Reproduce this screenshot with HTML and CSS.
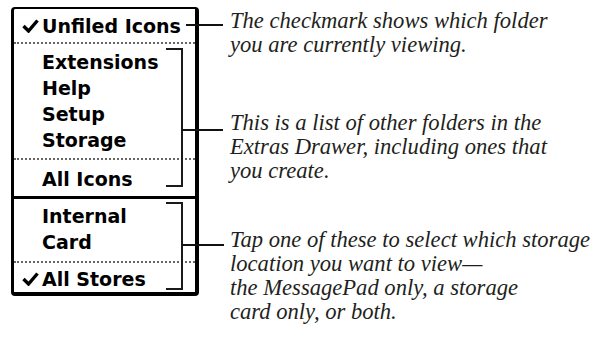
FILE: index.html
```html
<!DOCTYPE html>
<html lang="en">
<head>
    <meta charset="UTF-8">
    <title>Extras Drawer folder picker</title>
    <link rel="stylesheet" href="styles.css">
</head>
<body>
    <div class="figure">
        <div class="menu">
            <div class="section head">
                <div class="item"><span class="mark"><svg width="17" height="14" viewBox="0 0 17 14"><path d="M1.5 7 L6.5 12 L15.5 1.5" /></svg></span>Unfiled Icons</div>
            </div>
            <div class="dots"></div>
            <div class="section folders">
                <div class="item"><span class="mark"></span>Extensions</div>
                <div class="item"><span class="mark"></span>Help</div>
                <div class="item"><span class="mark"></span>Setup</div>
                <div class="item"><span class="mark"></span>Storage</div>
            </div>
            <div class="dots"></div>
            <div class="section all">
                <div class="item"><span class="mark"></span>All Icons</div>
            </div>
            <div class="rule"></div>
            <div class="section stores">
                <div class="item"><span class="mark"></span>Internal</div>
                <div class="item"><span class="mark"></span>Card</div>
            </div>
            <div class="dots"></div>
            <div class="section last">
                <div class="item"><span class="mark"><svg width="17" height="14" viewBox="0 0 17 14"><path d="M1.5 7 L6.5 12 L15.5 1.5" /></svg></span>All Stores</div>
            </div>
        </div>

        <div class="notes">
            <p class="note first">The checkmark shows which folder<br>you are currently viewing.</p>
            <p class="note second">This is a list of other folders in the<br>Extras Drawer, including ones that<br>you create.</p>
            <p class="note third">Tap one of these to select which storage<br>location you want to view&mdash;<br>the MessagePad only, a storage<br>card only, or both.</p>
        </div>

        <!-- callout lines -->
        <span class="bracket b1"></span>
        <span class="bracket b2"></span>
        <span class="leader l1"></span>
        <span class="leader l2"></span>
        <span class="leader l3"></span>
    </div>
</body>
</html>
```

FILE: styles.css
```css
/* Page */
body {
    margin: 0;
    background: #fff;
    overflow: hidden;
}
.figure {
    position: relative;
    display: flex;
    align-items: flex-start;
    padding: 7px 0 0 11px;
}

/* Picker menu */
.menu {
    width: 181px;
    border: 2px solid #000;
    border-left-width: 3px;
    border-right-width: 4px;
    border-bottom-width: 4px;
    border-radius: 4px;
    font-family: "DejaVu Sans", sans-serif;
    font-weight: bold;
    font-size: 19px;
    color: #000;
}
.item {
    display: flex;
    align-items: center;
    height: 26px;
    white-space: nowrap;
}
.mark {
    width: 28px;
    padding-left: 8px;
    box-sizing: border-box;
    display: flex;
    align-items: center;
}
.mark svg path {
    fill: none;
    stroke: #000;
    stroke-width: 3.4;
}
.head .item {
    height: 33px;
}
.folders {
    padding: 5px 0 5px;
}
.all {
    padding: 6px 0 4px;
}
.stores {
    padding: 4px 0 6px;
}
.last {
    padding-top: 3px;
}
.dots {
    border-top: 2px dotted #666;
}
.rule {
    border-top: 3px solid #000;
}

/* Annotations */
.notes {
    margin-left: 31px;
    padding-top: 2px;
    font-family: "Liberation Serif", serif;
    font-style: italic;
    font-size: 22.6px;
    line-height: 24px;
    color: #231f20;
}
.note {
    margin: 0;
    white-space: nowrap;
}
.second {
    margin-top: 54px;
}
.third {
    margin-top: 45px;
}

/* Callout lines */
.bracket {
    position: absolute;
    left: 166px;
    width: 15px;
    border: 2px solid #1a1a1a;
    border-left: none;
}
.b1 {
    top: 48px;
    height: 135px;
}
.b2 {
    top: 202px;
    height: 84px;
}
.leader {
    position: absolute;
    height: 2px;
    background: #111;
}
.l1 {
    left: 186px;
    top: 24px;
    width: 37px;
}
.l2 {
    left: 182px;
    top: 129px;
    width: 41px;
}
.l3 {
    left: 182px;
    top: 244px;
    width: 42px;
}
```
